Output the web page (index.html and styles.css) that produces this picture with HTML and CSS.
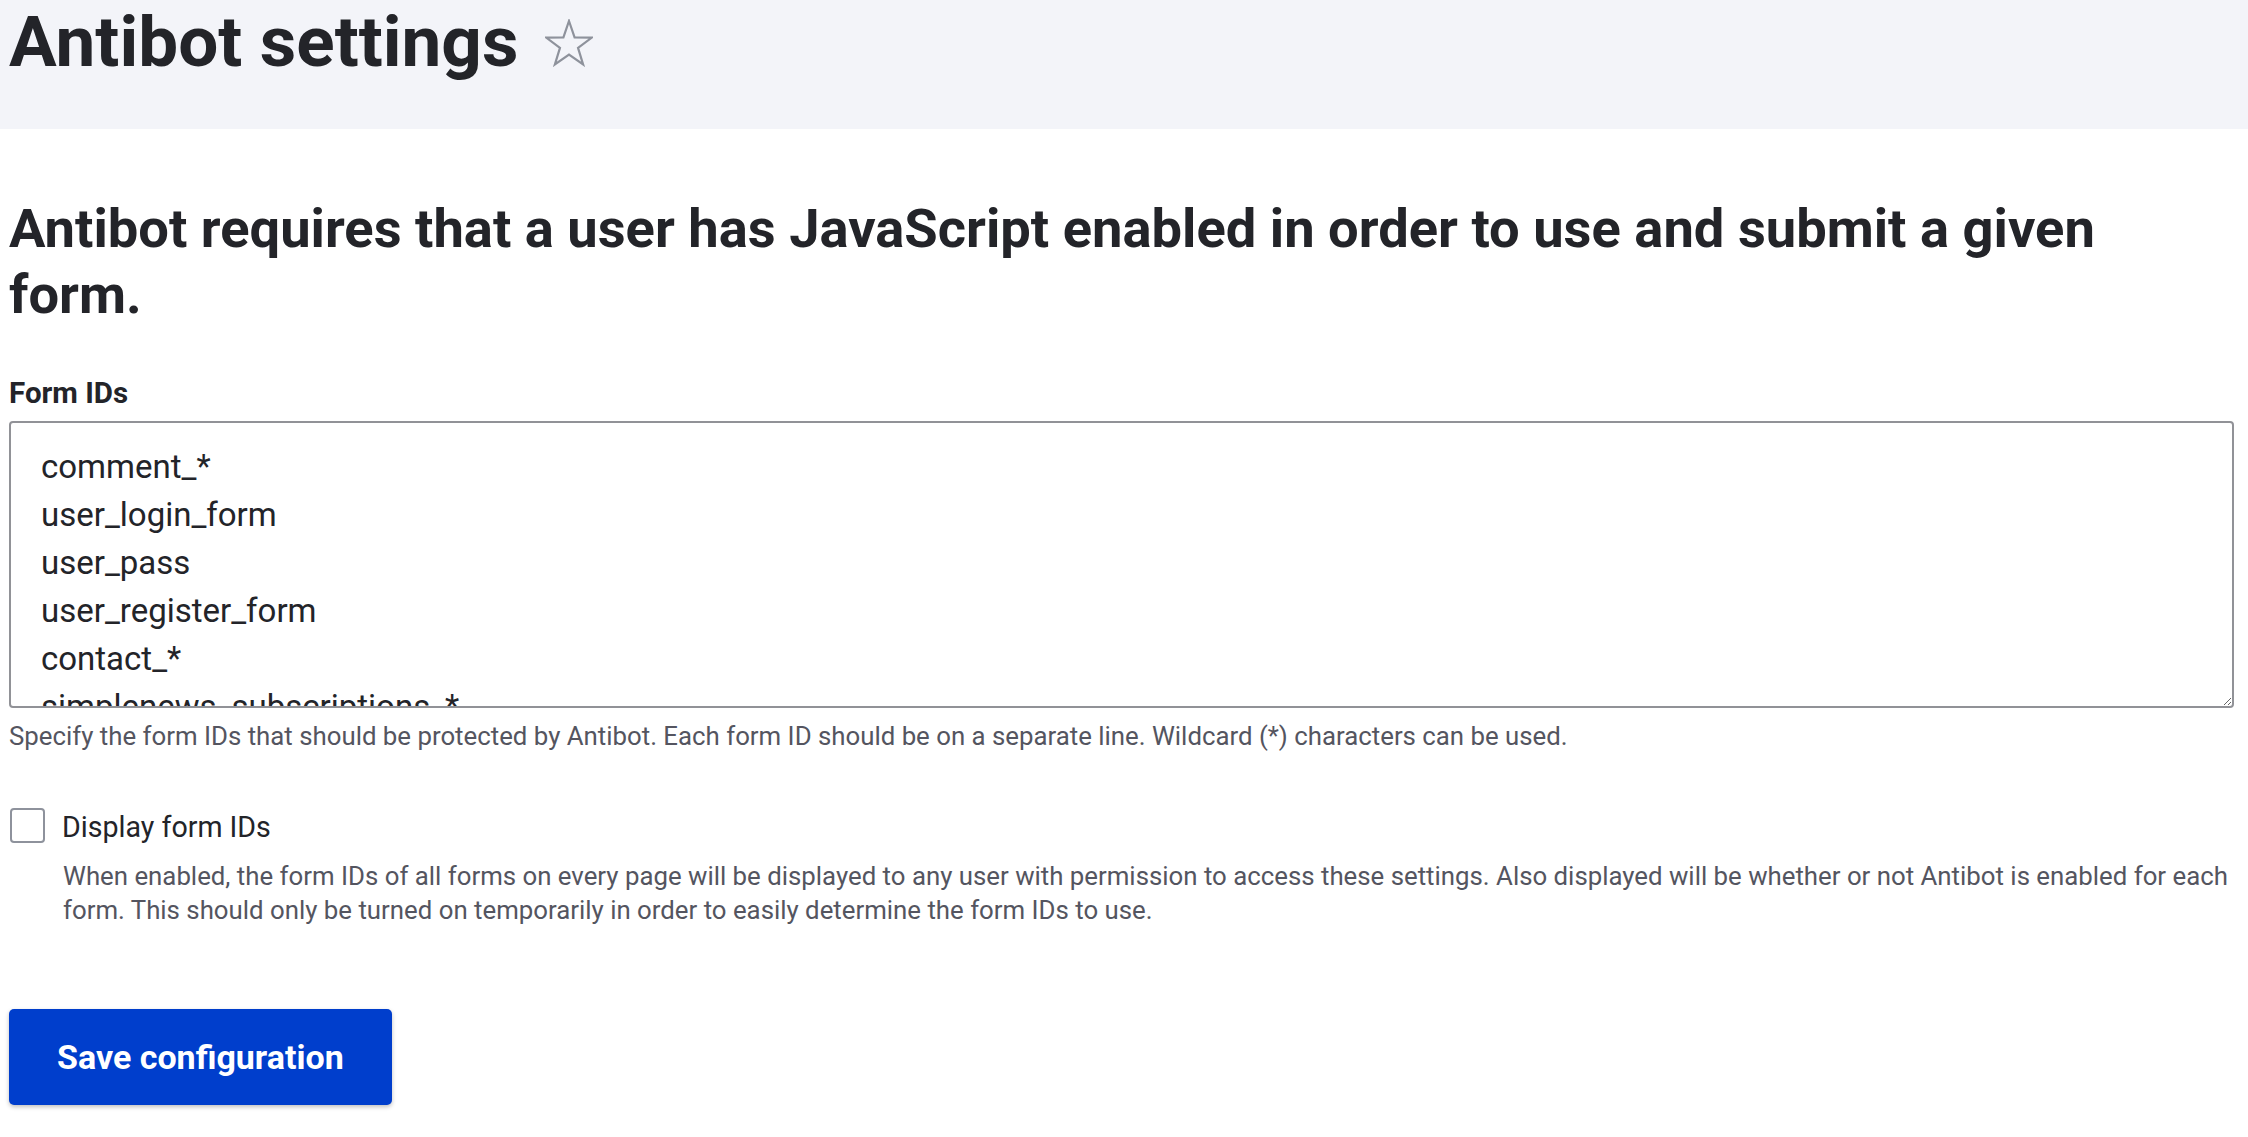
FILE: index.html
```html
<!DOCTYPE html>
<html lang="en">
<head>
<meta charset="utf-8">
<title>Antibot settings</title>
<link rel="stylesheet" href="styles.css">
</head>
<body>
<header class="page-header">
  <h1 class="page-title">Antibot settings</h1>
  <svg class="shortcut-star" width="48" height="48" viewBox="0 0 48 48" aria-hidden="true">
    <path d="M24 2 L29.58 18.31 L46.83 18.58 L33.03 28.94 L38.11 45.42 L24 35.5 L9.89 45.42 L14.97 28.94 L1.17 18.58 L18.42 18.31 Z" fill="none" stroke="#8e929c" stroke-width="2.2" stroke-linejoin="miter"/>
  </svg>
</header>
<main class="content">
  <h2 class="intro">Antibot requires that a user has JavaScript enabled in order to use and submit a given form.</h2>
  <form class="settings-form">
    <div class="form-item">
      <label class="form-label" for="form-ids">Form IDs</label>
      <textarea id="form-ids" class="form-textarea" spellcheck="false">comment_*
user_login_form
user_pass
user_register_form
contact_*
simplenews_subscriptions_*
webform_*</textarea>
      <div class="description">Specify the form IDs that should be protected by Antibot. Each form ID should be on a separate line. Wildcard (*) characters can be used.</div>
    </div>
    <div class="form-item checkbox-item">
      <div class="checkbox-row">
        <span class="checkbox" role="checkbox" aria-checked="false"></span>
        <label class="checkbox-label">Display form IDs</label>
      </div>
      <div class="description checkbox-description">When enabled, the form IDs of all forms on every page will be displayed to any user with permission to access these settings. Also displayed will be whether or not Antibot is enabled for each form. This should only be turned on temporarily in order to easily determine the form IDs to use.</div>
    </div>
    <div class="actions">
      <button type="button" class="button-primary">Save configuration</button>
    </div>
  </form>
</main>
</body>
</html>
```
FILE: styles.css
```css
html, body {
  margin: 0;
  padding: 0;
  background: #ffffff;
}
body {
  font-family: Roboto, "Liberation Sans", sans-serif;
  color: #232429;
}
.page-header {
  background: #f3f4f9;
  height: 129px;
  padding-left: 9px;
  display: flex;
  align-items: flex-start;
}
.page-title {
  margin: 0;
  font-size: 71px;
  line-height: 84px;
  font-weight: 700;
  color: #232429;
}
.shortcut-star {
  margin-left: 27px;
  margin-top: 19px;
}
.content {
  padding: 0 14px 40px 9px;
}
.intro {
  margin: 67px 0 0 0;
  font-size: 54.3px;
  line-height: 66px;
  font-weight: 700;
  color: #232429;
}
.settings-form {
  margin: 0;
}
.form-item {
  display: flex;
  flex-direction: column;
}
.form-label {
  margin-top: 47px;
  font-size: 29.5px;
  line-height: 36px;
  font-weight: 700;
  color: #232429;
}
.form-textarea {
  margin-top: 10px;
  box-sizing: border-box;
  width: 100%;
  height: 287px;
  border: 2px solid #919297;
  border-radius: 4px;
  padding: 20px 30px;
  font-family: Roboto, "Liberation Sans", sans-serif;
  font-size: 33px;
  line-height: 48px;
  color: #232429;
  background: #ffffff;
  overflow: hidden;
  resize: vertical;
  outline: none;
}
.description {
  margin-top: 11px;
  font-size: 25.8px;
  line-height: 34px;
  color: #545560;
}
.checkbox-item {
  margin-top: 55px;
}
.checkbox-row {
  display: flex;
  align-items: flex-start;
  gap: 17px;
}
.checkbox {
  box-sizing: border-box;
  width: 35px;
  height: 35px;
  margin-left: 1px;
  border: 2px solid #8e929c;
  border-radius: 4px;
  background: #ffffff;
  flex: none;
}
.checkbox-label {
  margin-top: 1px;
  font-size: 28.6px;
  line-height: 36px;
  color: #232429;
}
.checkbox-description {
  margin-top: 14px;
  padding-left: 54px;
}
.actions {
  margin-top: 82px;
}
.button-primary {
  box-sizing: border-box;
  height: 96px;
  padding: 0 48px;
  border: none;
  border-radius: 5px;
  background: #003ecc;
  color: #ffffff;
  font-family: Roboto, "Liberation Sans", sans-serif;
  font-size: 34px;
  font-weight: 700;
  box-shadow: 0 2px 4px rgba(0, 0, 0, 0.25);
  cursor: pointer;
}
```
